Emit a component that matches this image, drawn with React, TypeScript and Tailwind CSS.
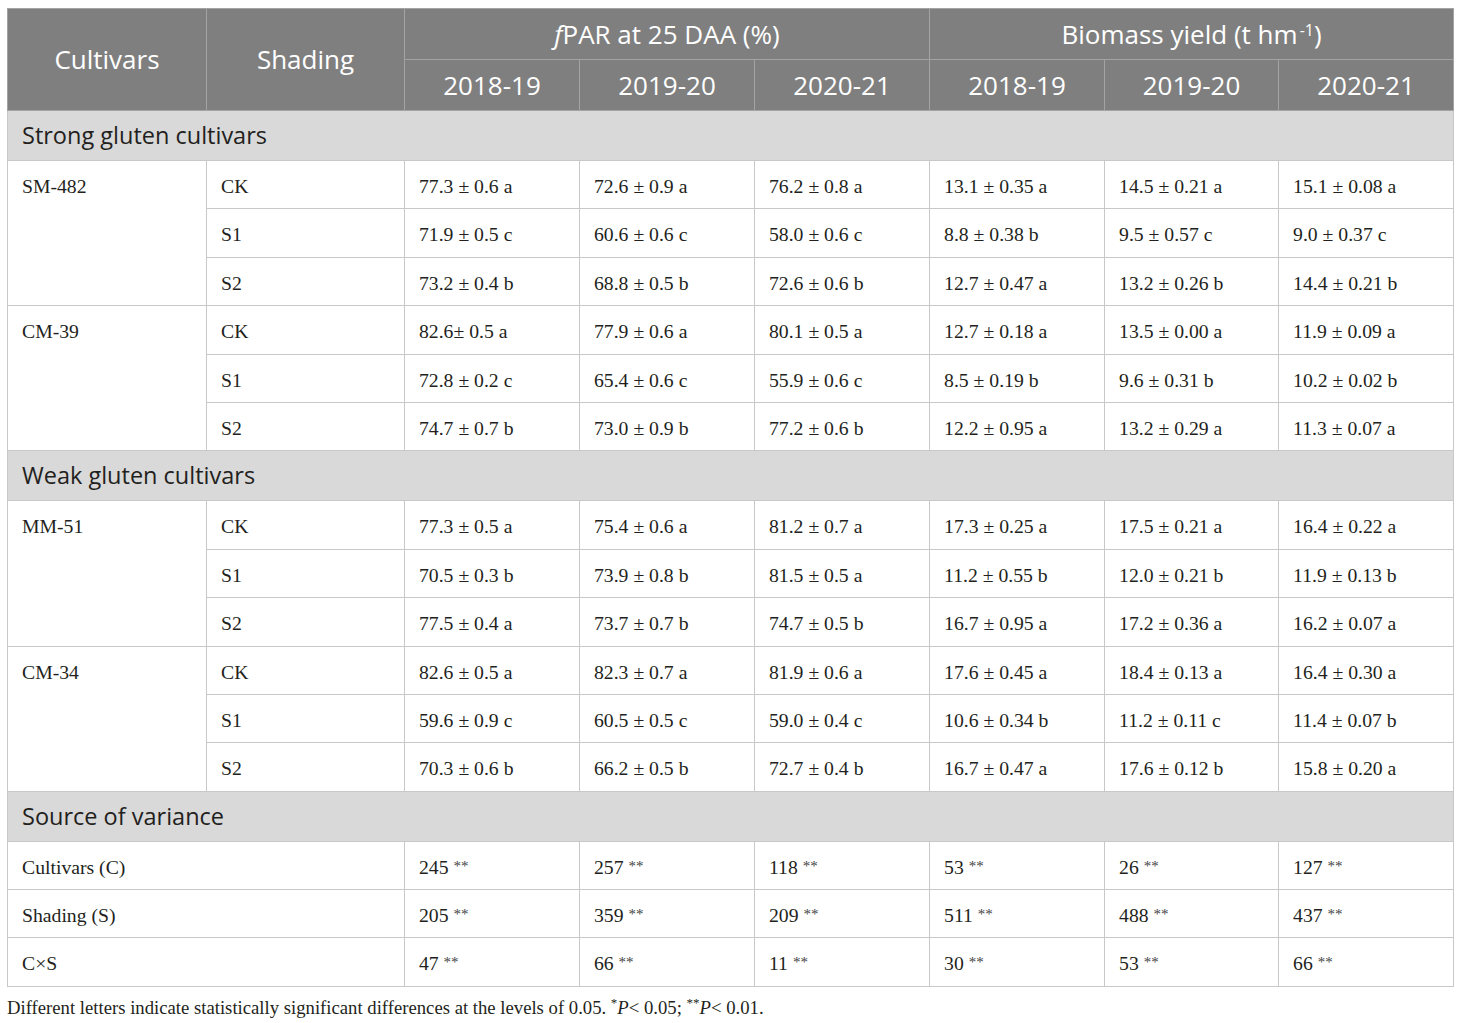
import type { ReactNode } from 'react'

type Group = { name: string; rows: { shade: string; values: string[] }[] }

const strong: Group[] = [
  {
    name: 'SM-482',
    rows: [
      { shade: 'CK', values: ['77.3 ± 0.6 a', '72.6 ± 0.9 a', '76.2 ± 0.8 a', '13.1 ± 0.35 a', '14.5 ± 0.21 a', '15.1 ± 0.08 a'] },
      { shade: 'S1', values: ['71.9 ± 0.5 c', '60.6 ± 0.6 c', '58.0 ± 0.6 c', '8.8 ± 0.38 b', '9.5 ± 0.57 c', '9.0 ± 0.37 c'] },
      { shade: 'S2', values: ['73.2 ± 0.4 b', '68.8 ± 0.5 b', '72.6 ± 0.6 b', '12.7 ± 0.47 a', '13.2 ± 0.26 b', '14.4 ± 0.21 b'] },
    ],
  },
  {
    name: 'CM-39',
    rows: [
      { shade: 'CK', values: ['82.6± 0.5 a', '77.9 ± 0.6 a', '80.1 ± 0.5 a', '12.7 ± 0.18 a', '13.5 ± 0.00 a', '11.9 ± 0.09 a'] },
      { shade: 'S1', values: ['72.8 ± 0.2 c', '65.4 ± 0.6 c', '55.9 ± 0.6 c', '8.5 ± 0.19 b', '9.6 ± 0.31 b', '10.2 ± 0.02 b'] },
      { shade: 'S2', values: ['74.7 ± 0.7 b', '73.0 ± 0.9 b', '77.2 ± 0.6 b', '12.2 ± 0.95 a', '13.2 ± 0.29 a', '11.3 ± 0.07 a'] },
    ],
  },
]

const weak: Group[] = [
  {
    name: 'MM-51',
    rows: [
      { shade: 'CK', values: ['77.3 ± 0.5 a', '75.4 ± 0.6 a', '81.2 ± 0.7 a', '17.3 ± 0.25 a', '17.5 ± 0.21 a', '16.4 ± 0.22 a'] },
      { shade: 'S1', values: ['70.5 ± 0.3 b', '73.9 ± 0.8 b', '81.5 ± 0.5 a', '11.2 ± 0.55 b', '12.0 ± 0.21 b', '11.9 ± 0.13 b'] },
      { shade: 'S2', values: ['77.5 ± 0.4 a', '73.7 ± 0.7 b', '74.7 ± 0.5 b', '16.7 ± 0.95 a', '17.2 ± 0.36 a', '16.2 ± 0.07 a'] },
    ],
  },
  {
    name: 'CM-34',
    rows: [
      { shade: 'CK', values: ['82.6 ± 0.5 a', '82.3 ± 0.7 a', '81.9 ± 0.6 a', '17.6 ± 0.45 a', '18.4 ± 0.13 a', '16.4 ± 0.30 a'] },
      { shade: 'S1', values: ['59.6 ± 0.9 c', '60.5 ± 0.5 c', '59.0 ± 0.4 c', '10.6 ± 0.34 b', '11.2 ± 0.11 c', '11.4 ± 0.07 b'] },
      { shade: 'S2', values: ['70.3 ± 0.6 b', '66.2 ± 0.5 b', '72.7 ± 0.4 b', '16.7 ± 0.47 a', '17.6 ± 0.12 b', '15.8 ± 0.20 a'] },
    ],
  },
]

const variance = [
  { label: 'Cultivars (C)', values: ['245', '257', '118', '53', '26', '127'] },
  { label: 'Shading (S)', values: ['205', '359', '209', '511', '488', '437'] },
  { label: 'C×S', values: ['47', '66', '11', '30', '53', '66'] },
]

const years = ['2018-19', '2019-20', '2020-21']

const th = 'border border-[#a3a3a3] bg-[#7f7f7f] font-normal text-white text-[26px] text-center align-middle'
const td = 'border border-[#c8c8c8] px-[14px] pt-[13px] align-top text-[19.7px] leading-[24px] text-[#231f20]'

function Section({ title }: { title: string }) {
  return (
    <tr className="h-[50px]">
      <td
        colSpan={8}
        className="border border-[#c8c8c8] bg-[#d9d9d9] px-[14px] align-middle font-['Open_Sans',sans-serif] text-[23.5px] text-[#231f20]"
      >
        {title}
      </td>
    </tr>
  )
}

function Stars({ children }: { children: ReactNode }) {
  return (
    <>
      {children} <span className="relative -top-[3px] text-[15px] text-[#444]">**</span>
    </>
  )
}

function GroupRows({ group }: { group: Group }) {
  return (
    <>
      {group.rows.map((row, i) => (
        <tr key={row.shade} className="h-[48.4px]">
          {i === 0 && (
            <td rowSpan={3} className={td}>
              {group.name}
            </td>
          )}
          <td className={td}>{row.shade}</td>
          {row.values.map((v, j) => (
            <td key={j} className={td}>
              {v}
            </td>
          ))}
        </tr>
      ))}
    </>
  )
}

export default function App() {
  return (
    <div className="min-h-screen bg-white pl-[7px] pt-[8px] font-['Liberation_Serif',serif]">
      <table className="w-[1446px] table-fixed border-collapse">
        <colgroup>
          <col className="w-[199px]" />
          <col className="w-[198px]" />
          <col className="w-[175px]" />
          <col className="w-[175px]" />
          <col className="w-[175px]" />
          <col className="w-[175px]" />
          <col className="w-[174px]" />
          <col className="w-[175px]" />
        </colgroup>
        <thead className="font-['Open_Sans',sans-serif]">
          <tr className="h-[51px]">
            <th rowSpan={2} className={th}>
              Cultivars
            </th>
            <th rowSpan={2} className={th}>
              Shading
            </th>
            <th colSpan={3} className={th}>
              <span className="italic">f</span>PAR at 25 DAA (%)
            </th>
            <th colSpan={3} className={th}>
              Biomass yield (t hm<sup className="ml-[2px] text-[16px]">-1</sup>)
            </th>
          </tr>
          <tr className="h-[51px]">
            {[...years, ...years].map((y, i) => (
              <th key={i} className={th}>
                {y}
              </th>
            ))}
          </tr>
        </thead>
        <tbody>
          <Section title="Strong gluten cultivars" />
          {strong.map((g) => (
            <GroupRows key={g.name} group={g} />
          ))}
          <Section title="Weak gluten cultivars" />
          {weak.map((g) => (
            <GroupRows key={g.name} group={g} />
          ))}
          <Section title="Source of variance" />
          {variance.map((row) => (
            <tr key={row.label} className="h-[48.4px]">
              <td colSpan={2} className={td}>
                {row.label}
              </td>
              {row.values.map((v, j) => (
                <td key={j} className={td}>
                  <Stars>{v}</Stars>
                </td>
              ))}
            </tr>
          ))}
        </tbody>
      </table>
      <p className="mt-[7px] text-[18.7px] text-[#231f20]">
        Different letters indicate statistically significant differences at the levels of 0.05.{' '}
        <sup className="text-[13px]">*</sup>
        <span className="italic">P</span>&lt; 0.05; <sup className="text-[13px]">**</sup>
        <span className="italic">P</span>&lt; 0.01.
      </p>
    </div>
  )
}
